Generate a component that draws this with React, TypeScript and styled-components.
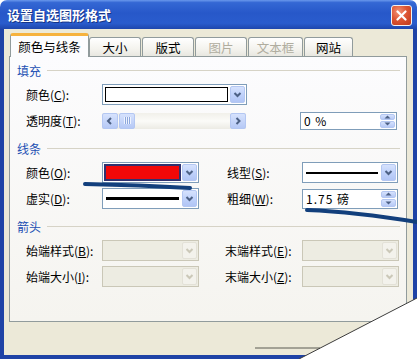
import React from "react";
import styled, { createGlobalStyle } from "styled-components";

const GlobalStyle = createGlobalStyle`
  * { box-sizing: border-box; }
  html, body { margin: 0; padding: 0; background: #ffffff; }
  body {
    font-family: "Noto Sans CJK SC", "Noto Sans", sans-serif;
    font-size: 12px;
    color: #000;
  }
`;

const Window = styled.div`
  position: relative;
  width: 417px;
  height: 359px;
  display: flex;
  flex-direction: column;
  overflow: hidden;
`;

const TitleBar = styled.div`
  flex: none;
  height: 29px;
  display: flex;
  align-items: center;
  justify-content: space-between;
  padding: 0 5px 0 7px;
  border-radius: 7px 7px 0 0;
  background: linear-gradient(
    to bottom,
    #6a98ec 0%,
    #3467d4 9%,
    #2758c9 45%,
    #2a5ccd 80%,
    #1e46ad 100%
  );
`;

const Title = styled.span`
  color: #fff;
  font-size: 13px;
  font-weight: 700;
  text-shadow: 1px 1px 0 #163486;
`;

const CloseButton = styled.div`
  width: 21px;
  height: 21px;
  margin-top: 1px;
  display: flex;
  align-items: center;
  justify-content: center;
  border: 1px solid #f2f2f2;
  border-radius: 3px;
  background: radial-gradient(circle at 35% 30%, #f39377 0%, #dd5634 45%, #bf381b 100%);
`;

const Frame = styled.div`
  flex: 1;
  display: flex;
  flex-direction: column;
  padding: 4px 6px 0 5px;
  background: #ece9d8;
  border: 4px solid #1f43a6;
  border-top: none;
`;

const TabStrip = styled.div`
  position: relative;
  z-index: 1;
  display: flex;
  align-items: flex-end;
  height: 23px;
  padding-left: 1px;
`;

const Tab = styled.div<{ $w: number; $ml: number; $active?: boolean; $disabled?: boolean }>`
  flex: none;
  width: ${(p) => p.$w}px;
  height: ${(p) => (p.$active ? 24 : 19)}px;
  margin-left: ${(p) => p.$ml}px;
  margin-bottom: ${(p) => (p.$active ? -1 : 0)}px;
  display: flex;
  align-items: center;
  justify-content: center;
  font-size: 12.5px;
  color: ${(p) => (p.$disabled ? "#b0ad9f" : "#000")};
  border: 1px solid #919b9c;
  border-bottom: none;
  border-top: ${(p) => (p.$active ? "3px solid #f6b23e" : "1px solid #919b9c")};
  border-radius: 3px 3px 0 0;
  background: ${(p) =>
    p.$active ? "#fcfcfe" : "linear-gradient(to bottom, #ffffff 0%, #f4f3ee 60%, #e8e7e0 100%)"};
`;

const Panel = styled.div`
  flex: none;
  height: 266px;
  display: flex;
  flex-direction: column;
  gap: 10px;
  padding: 6px 6px 0 7px;
  border: 1px solid #919b9c;
  background: linear-gradient(to bottom, #fcfcfe 0%, #f5f4ef 100%);
`;

const Section = styled.div`
  display: flex;
  flex-direction: column;
  gap: 5px;
`;

const SectionHeader = styled.div`
  display: flex;
  align-items: center;
  gap: 6px;
  height: 14px;
  margin-bottom: 2px;
  color: #2350b3;
  &::after {
    content: "";
    flex: 1;
    height: 1px;
    background: #d6d3c6;
  }
`;

const Row = styled.div`
  display: flex;
  align-items: center;
  height: 21px;
  padding-left: 9px;
`;

const Label = styled.span<{ $w: number; $ml?: number }>`
  flex: none;
  width: ${(p) => p.$w}px;
  margin-left: ${(p) => p.$ml ?? 0}px;
  white-space: nowrap;
`;

const Key = styled.span`
  text-decoration: underline;
`;

const Combo = styled.div<{ $w: number; $disabled?: boolean }>`
  flex: none;
  width: ${(p) => p.$w}px;
  height: 21px;
  display: flex;
  gap: 1px;
  padding: 1px;
  border: 1px solid ${(p) => (p.$disabled ? "#cac7b7" : "#7f9db9")};
  background: ${(p) => (p.$disabled ? "#edece2" : "#fff")};
`;

const ComboField = styled.div<{ $selected?: boolean }>`
  flex: 1;
  display: flex;
  align-items: center;
  padding: ${(p) => (p.$selected ? "2px" : "0 1px")};
  background: ${(p) => (p.$selected ? "#30326f" : "transparent")};
`;

const Swatch = styled.div<{ $color: string; $outlined?: boolean }>`
  flex: 1;
  align-self: stretch;
  margin: ${(p) => (p.$outlined ? "1px 0" : "0")};
  background: ${(p) => p.$color};
  border: ${(p) => (p.$outlined ? "1px solid #000" : "none")};
`;

const LineSample = styled.div<{ $t: number }>`
  flex: 1;
  height: ${(p) => p.$t}px;
  margin: 0 1px;
  background: #000;
`;

const DropButton = styled.div<{ $disabled?: boolean }>`
  flex: none;
  width: 15px;
  display: flex;
  align-items: center;
  justify-content: center;
  border-radius: 2px;
  border: 1px solid ${(p) => (p.$disabled ? "#e3e1d7" : "#b4c7f2")};
  background: ${(p) =>
    p.$disabled
      ? "#f3f2ec"
      : "linear-gradient(to bottom, #d6e2fd 0%, #c0d2fb 50%, #b1c5f5 100%)"};
`;

const Spin = styled.div<{ $w: number; $h: number; $ml: number }>`
  flex: none;
  width: ${(p) => p.$w}px;
  height: ${(p) => p.$h}px;
  margin-left: ${(p) => p.$ml}px;
  display: flex;
  padding: 1px;
  border: 1px solid #7f9db9;
  background: #fff;
`;

const SpinText = styled.div`
  flex: 1;
  display: flex;
  align-items: center;
  padding-left: 2px;
  letter-spacing: 1px;
`;

const SpinButtons = styled.div`
  flex: none;
  width: 15px;
  display: flex;
  flex-direction: column;
  gap: 1px;
`;

const SpinButton = styled.div`
  flex: 1;
  display: flex;
  align-items: center;
  justify-content: center;
  border-radius: 2px;
  border: 1px solid #b4c7f2;
  background: linear-gradient(to bottom, #d6e2fd 0%, #b6c9f6 100%);
`;

const Slider = styled.div<{ $w: number }>`
  flex: none;
  width: ${(p) => p.$w}px;
  height: 16px;
  display: flex;
  gap: 1px;
  background: linear-gradient(to bottom, #f1f0ea 0%, #fbfbf8 50%, #ecebe4 100%);
`;

const ScrollButton = styled.div`
  flex: none;
  width: 16px;
  display: flex;
  align-items: center;
  justify-content: center;
  border-radius: 2px;
  border: 1px solid #b4c7f2;
  background: linear-gradient(to bottom, #d6e2fd 0%, #b6c9f6 100%);
`;

const Thumb = styled(ScrollButton)`
  gap: 1px;
  &::before {
    content: "";
    width: 7px;
    height: 7px;
    background: repeating-linear-gradient(
      to right,
      #eef3ff 0 1px,
      #8da7dc 1px 2px
    );
  }
`;

const Track = styled.div`
  flex: 1;
`;

const Overlay = styled.svg`
  position: absolute;
  left: 0;
  top: 0;
  pointer-events: none;
`;

const Chevron = ({ dir, color = "#4d6185" }: { dir: "down" | "left" | "right"; color?: string }) => {
  const d =
    dir === "down" ? "M1.5 2 L4.5 5 L7.5 2" : dir === "left" ? "M5 1 L2 4 L5 7" : "M2.5 1 L5.5 4 L2.5 7";
  const w = dir === "down" ? 9 : 8;
  const h = dir === "down" ? 7 : 8;
  return (
    <svg width={w} height={h} viewBox={`0 0 ${w} ${h}`}>
      <path d={d} fill="none" stroke={color} strokeWidth={2} />
    </svg>
  );
};

const Triangle = ({ up }: { up?: boolean }) => (
  <svg width="7" height="4" viewBox="0 0 7 4">
    <path d={up ? "M0.5 3.5 L3.5 0.5 L6.5 3.5 Z" : "M0.5 0.5 L3.5 3.5 L6.5 0.5 Z"} fill="#4d6185" />
  </svg>
);

type ComboProps = {
  width: number;
  disabled?: boolean;
  children?: React.ReactNode;
  selected?: boolean;
};

const ComboBox = ({ width, disabled, children, selected }: ComboProps) => (
  <Combo $w={width} $disabled={disabled}>
    <ComboField $selected={selected}>{children}</ComboField>
    <DropButton $disabled={disabled}>
      <Chevron dir="down" color={disabled ? "#cbc8b8" : "#4d6185"} />
    </DropButton>
  </Combo>
);

const SpinEdit = ({ width, height, ml, value }: { width: number; height: number; ml: number; value: string }) => (
  <Spin $w={width} $h={height} $ml={ml}>
    <SpinText>{value}</SpinText>
    <SpinButtons>
      <SpinButton>
        <Triangle up />
      </SpinButton>
      <SpinButton>
        <Triangle />
      </SpinButton>
    </SpinButtons>
  </Spin>
);

const tabs = [
  { label: "颜色与线条", w: 79, ml: 0, active: true },
  { label: "大小", w: 52, ml: 0 },
  { label: "版式", w: 52, ml: 1 },
  { label: "图片", w: 52, ml: 1, disabled: true },
  { label: "文本框", w: 55, ml: 1, disabled: true },
  { label: "网站", w: 49, ml: 1 },
];

export default function App() {
  return (
    <>
      <GlobalStyle />
      <Window>
        <TitleBar>
          <Title>设置自选图形格式</Title>
          <CloseButton>
            <svg width="11" height="11" viewBox="0 0 11 11">
              <path d="M1.5 1.5 L9.5 9.5 M9.5 1.5 L1.5 9.5" stroke="#fff" strokeWidth={2.2} strokeLinecap="round" />
            </svg>
          </CloseButton>
        </TitleBar>
        <Frame>
          <TabStrip>
            {tabs.map((t) => (
              <Tab key={t.label} $w={t.w} $ml={t.ml} $active={t.active} $disabled={t.disabled}>
                {t.label}
              </Tab>
            ))}
          </TabStrip>
          <Panel>
            <Section>
              <SectionHeader>填充</SectionHeader>
              <Row>
                <Label $w={76}>
                  颜色(<Key>C</Key>):
                </Label>
                <ComboBox width={145}>
                  <Swatch $color="#fff" $outlined />
                </ComboBox>
              </Row>
              <Row>
                <Label $w={76}>
                  透明度(<Key>T</Key>):
                </Label>
                <Slider $w={144}>
                  <ScrollButton>
                    <Chevron dir="left" />
                  </ScrollButton>
                  <Thumb />
                  <Track />
                  <ScrollButton>
                    <Chevron dir="right" />
                  </ScrollButton>
                </Slider>
                <SpinEdit width={97} height={18} ml={54} value="0 %" />
              </Row>
            </Section>
            <Section>
              <SectionHeader>线条</SectionHeader>
              <Row>
                <Label $w={76}>
                  颜色(<Key>O</Key>):
                </Label>
                <ComboBox width={97} selected>
                  <Swatch $color="#f20808" />
                </ComboBox>
                <Label $w={75} $ml={28}>
                  线型(<Key>S</Key>):
                </Label>
                <ComboBox width={96}>
                  <LineSample $t={2} />
                </ComboBox>
              </Row>
              <Row>
                <Label $w={76}>
                  虚实(<Key>D</Key>):
                </Label>
                <ComboBox width={97}>
                  <LineSample $t={3} />
                </ComboBox>
                <Label $w={75} $ml={28}>
                  粗细(<Key>W</Key>):
                </Label>
                <SpinEdit width={96} height={20} ml={0} value="1.75 磅" />
              </Row>
            </Section>
            <Section>
              <SectionHeader>箭头</SectionHeader>
              <Row>
                <Label $w={76}>
                  始端样式(<Key>B</Key>):
                </Label>
                <ComboBox width={97} disabled />
                <Label $w={77} $ml={26}>
                  末端样式(<Key>E</Key>):
                </Label>
                <ComboBox width={97} disabled />
              </Row>
              <Row>
                <Label $w={76}>
                  始端大小(<Key>I</Key>):
                </Label>
                <ComboBox width={97} disabled />
                <Label $w={77} $ml={26}>
                  末端大小(<Key>Z</Key>):
                </Label>
                <ComboBox width={97} disabled />
              </Row>
            </Section>
          </Panel>
        </Frame>
        <Overlay width="417" height="359" viewBox="0 0 417 359">
          <path d="M85 184 Q 140 185 190 188" fill="none" stroke="#123f7c" strokeWidth={4} strokeLinecap="round" />
          <path d="M307 210 Q 355 212 417 222" fill="none" stroke="#123f7c" strokeWidth={4} strokeLinecap="round" />
          <polygon points="299,359 417,298 417,359" fill="#ffffff" />
          <path d="M255 348 L320 348" stroke="#5a5a52" strokeWidth={1} />
          <path d="M299 359 L417 298" stroke="#3c3c3c" strokeWidth={1} />
        </Overlay>
      </Window>
    </>
  );
}
